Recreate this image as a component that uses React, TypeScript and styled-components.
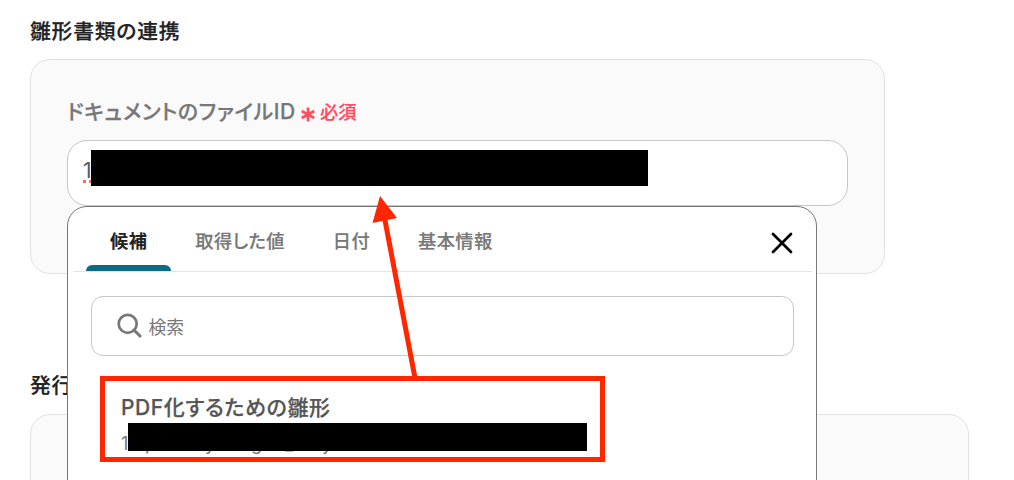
import React from "react";
import styled, { createGlobalStyle, css } from "styled-components";

const GlobalStyle = createGlobalStyle`
  * { box-sizing: border-box; }
  body {
    margin: 0;
    background: #fff;
    overflow: hidden;
    font-family: Inter, "Noto Sans CJK JP", sans-serif;
    font-feature-settings: "palt";
  }
`;

const Page = styled.main`
  position: relative;
  width: 1014px;
  height: 480px;
  padding: 16px 0 0 30px;
  overflow: hidden;
`;

const Heading = styled.h2`
  margin: 0;
  height: 30px;
  line-height: 32px;
  font-size: 20.8px;
  font-weight: 500;
  letter-spacing: 0.8px;
  -webkit-text-stroke: 0.25px currentColor;
  color: #222;
  white-space: nowrap;
`;

const Panel = styled.section<{ $width: number; $height: number }>`
  width: ${(p) => p.$width}px;
  height: ${(p) => p.$height}px;
  margin-top: 13px;
  padding: 36px;
  border: 1px solid #e0e0e5;
  border-radius: 20px;
  background: #fafafa;
`;

const NextHeading = styled(Heading)`
  margin-top: 97px;
  line-height: 30px;
`;

const LabelRow = styled.div`
  display: flex;
  align-items: center;
  height: 32px;
  margin-bottom: 12px;
`;

const Label = styled.label`
  font-size: 21px;
  line-height: 30px;
  font-weight: 500;
  letter-spacing: 0.6px;
  -webkit-text-stroke: 0.25px currentColor;
  color: #777;
  white-space: nowrap;
`;

const RequiredMark = styled.svg`
  width: 14px;
  height: 15px;
  margin: 5px 5px 0 5px;
`;

const Required = styled.span`
  font-size: 18.2px;
  line-height: 32px;
  letter-spacing: 0.3px;
  font-weight: 500;
  -webkit-text-stroke: 0.25px currentColor;
  color: #ff4d5e;
`;

const Field = styled.div`
  position: relative;
  width: 781px;
`;

const Input = styled.div`
  display: flex;
  align-items: flex-start;
  height: 66px;
  padding: 9px 14px 9px 15px;
  border: 1px solid #c6c6c6;
  border-radius: 20px;
  background: #fff;
`;

const Value = styled.span`
  width: 8px;
  height: 33px;
  font-size: 21px;
  line-height: 42px;
  color: #555b66;
  background: linear-gradient(90deg, #ff6b62 3px, transparent 3px) 0 100% / 6px 3px repeat-x;
`;

const Redaction = styled.div<{ $width: number; $height: number }>`
  flex: none;
  width: ${(p) => p.$width}px;
  height: ${(p) => p.$height}px;
  background: #000;
`;

const Popup = styled.div`
  position: absolute;
  top: 66px;
  left: 0;
  width: 750px;
  height: 300px;
  border: 1px solid #777;
  border-radius: 20px;
  background: #fff;
`;

const TabBar = styled.div`
  display: flex;
  height: 65px;
  margin: 0 4px 0 5px;
  padding-left: 13px;
  border-bottom: 1px solid #e4e4e8;
`;

const Tab = styled.div<{ $active?: boolean }>`
  display: flex;
  flex-direction: column;
  justify-content: space-between;
  height: 64px;
  padding: 0 24px;
  font-size: 18.2px;
  line-height: 69px;
  font-weight: 500;
  letter-spacing: 0.45px;
  -webkit-text-stroke: 0.2px currentColor;
  color: #777;
  white-space: nowrap;
  ${(p) =>
    p.$active &&
    css`
      color: #222;
      font-weight: 700;
      -webkit-text-stroke: 0;
    `}
`;

const TabText = styled.span`
  height: 58px;
`;

const TabIndicator = styled.span`
  height: 6px;
  margin: 0 -24px;
  border-radius: 6px 6px 0 0;
  background: #0b6a85;
`;

const CloseButton = styled.button`
  margin: 25px 19px 0 auto;
  padding: 0;
  width: 22px;
  height: 22px;
  border: 0;
  background: none;
`;

const Search = styled.div`
  display: flex;
  align-items: center;
  width: 703px;
  height: 60px;
  margin: 24px 0 0 23px;
  padding-left: 25px;
  border: 1px solid #c8c8c8;
  border-radius: 12px;
  font-size: 17.8px;
  color: #777;
`;

const SearchIcon = styled.svg`
  width: 25px;
  height: 25px;
  margin: -2px 6.500px 0 0;
`;

const Option = styled.div`
  width: 505px;
  height: 86px;
  margin: 20px 0 0 32px;
  padding: 12px 0 0 16px;
  border: 5px solid #ff2600;
`;

const OptionTitle = styled.div`
  height: 30px;
  line-height: 29px;
  font-size: 21px;
  font-weight: 500;
  letter-spacing: 0.6px;
  -webkit-text-stroke: 0.25px currentColor;
  color: #555;
  white-space: nowrap;
`;

const OptionDetail = styled.div`
  position: relative;
  display: flex;
  font-size: 18px;
  line-height: 41px;
  height: 28px;
  color: #777;
`;

const DetailStart = styled.span`
  width: 7px;
`;

const HiddenText = styled.span<{ $x: number }>`
  position: absolute;
  left: ${(p) => p.$x}px;
  top: 0;
`;

const DetailCover = styled(Redaction)`
  position: relative;
`;

const Arrow = styled.svg`
  position: absolute;
  left: 360px;
  top: 190px;
  width: 70px;
  height: 190px;
  pointer-events: none;
`;

const tabs = ["候補", "取得した値", "日付", "基本情報"];

export default function App() {
  return (
    <Page>
      <GlobalStyle />
      <Heading>雛形書類の連携</Heading>
      <Panel $width={855} $height={215}>
        <LabelRow>
          <Label>ドキュメントのファイルID</Label>
          <RequiredMark viewBox="0 0 14 15">
            <path d="M7 0.500v14M0.700 4l12.600 7M13.300 4L0.700 11" stroke="#ff4d5e" strokeWidth="2.6" />
          </RequiredMark>
          <Required>必須</Required>
        </LabelRow>
        <Field>
          <Input>
            <Value>1</Value>
            <Redaction $width={557} $height={36} />
          </Input>
          <Popup>
            <TabBar>
              {tabs.map((name, i) => (
                <Tab key={name} $active={i === 0}>
                  <TabText>{name}</TabText>
                  {i === 0 && <TabIndicator />}
                </Tab>
              ))}
              <CloseButton aria-label="閉じる">
                <svg width="22" height="22" viewBox="0 0 22 22">
                  <path d="M2 2l18 18M20 2L2 20" stroke="#000" strokeWidth="2.7" strokeLinecap="round" />
                </svg>
              </CloseButton>
            </TabBar>
            <Search>
              <SearchIcon viewBox="0 0 25 25" fill="none" stroke="#777">
                <circle cx="10.7" cy="10.8" r="9" strokeWidth="2.7" />
                <path d="M17 17l6 6" strokeWidth="3" strokeLinecap="round" />
              </SearchIcon>
              検索
            </Search>
            <Option>
              <OptionTitle>PDF化するための雛形</OptionTitle>
              <OptionDetail>
                <DetailStart>1</DetailStart>
                <HiddenText $x={24}>p</HiddenText>
                <HiddenText $x={84}>y</HiddenText>
                <HiddenText $x={130}>g</HiddenText>
                <HiddenText $x={164}>_</HiddenText>
                <HiddenText $x={201}>y</HiddenText>
                <DetailCover $width={459} $height={28} />
              </OptionDetail>
            </Option>
          </Popup>
        </Field>
      </Panel>
      <NextHeading>発行</NextHeading>
      <Panel $width={939} $height={120} />
      <Arrow viewBox="360 190 70 190">
        <path d="M384 215L415 378" stroke="#ff2600" strokeWidth="5" />
        <path d="M380 196L397 218L372.500 223Z" fill="#ff2600" />
      </Arrow>
    </Page>
  );
}
